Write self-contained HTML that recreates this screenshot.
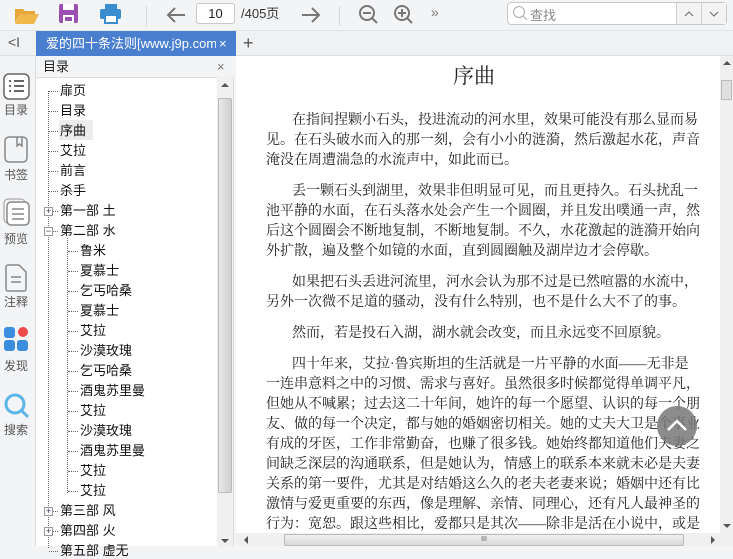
<!DOCTYPE html>
<html><head><meta charset="utf-8">
<style>
*{margin:0;padding:0;box-sizing:border-box}
body{width:733px;height:546px;overflow:hidden;background:#f3f4f6;font-family:"Liberation Sans","Noto Sans CJK SC",sans-serif;position:relative;color:#222}
.abs{position:absolute}
.tb{left:0;top:0;width:733px;height:31px;background:#f3f4f6;border-bottom:1px solid #e2e3e5}
.tabbar{left:0;top:31px;width:733px;height:25px;background:#f0f1f3;border-bottom:1px solid #dcdcdc}
.tab{left:36px;top:31px;width:200px;height:25px;background:#4a7fd0;color:#fff;font-size:13px;line-height:25px;padding-left:10px;white-space:nowrap;overflow:hidden}
.side{left:0;top:56px;width:36px;height:490px;background:#f3f4f6;border-right:1px solid #dcdcdc}
.side .l{position:absolute;left:0;width:32px;text-align:center;font-size:12px;color:#555}
.toc{left:36px;top:56px;width:198px;height:490px;background:#fff;border-right:1px solid #ddd}
.toch{left:36px;top:56px;width:198px;height:22px;background:#f3f4f6;border-bottom:1px solid #ddd;font-size:13px;line-height:22px;padding-left:7px}
.it{position:absolute;font-size:13px;line-height:16px;white-space:nowrap;color:#111}
.doc{left:236px;top:56px;width:484px;height:477px;background:#fff}
.ln{position:absolute;left:266px;width:414px;font-family:"Liberation Serif","Noto Serif CJK SC",serif;font-size:14px;line-height:20px;text-align:justify;text-align-last:justify;white-space:nowrap;color:#222}
.ln.i{left:292px;width:388px}
.ln.e{text-align-last:left}
</style></head><body>
<div class="abs tb"></div>
<svg class="abs" style="left:14px;top:5px" width="26" height="20"><path d="M1 4h8l2 2h10v3H6L1 18z" fill="#e8a63a"/><path d="M6 9h19l-5 10H1z" fill="#f0b84a"/></svg>
<svg class="abs" style="left:59px;top:4px" width="20" height="20"><rect x="0" y="0" width="19" height="19" rx="2" fill="#9b4fb0"/><rect x="4" y="0" width="11" height="6" fill="#fff"/><rect x="4" y="11" width="11" height="8" fill="#fff"/><rect x="6" y="13" width="7" height="4" fill="#9b4fb0"/></svg>
<svg class="abs" style="left:100px;top:4px" width="22" height="20"><rect x="5" y="0" width="12" height="5" fill="#3a8ed0"/><rect x="0" y="5" width="21" height="10" rx="2" fill="#3a8ed0"/><rect x="5" y="11" width="12" height="8" fill="#fff" stroke="#3a8ed0" stroke-width="2"/></svg>
<div class="abs" style="left:146px;top:6px;width:1px;height:20px;background:#d8d8d8"></div>
<svg class="abs" style="left:165px;top:5px" width="22" height="20"><path d="M20 10H3M10 3L3 10l7 7" stroke="#777" stroke-width="2" fill="none"/></svg>
<div class="abs" style="left:196px;top:3px;width:39px;height:21px;border:1px solid #c8c8c8;border-radius:3px;background:#fff;font-size:13px;line-height:19px;text-align:center">10</div>
<div class="abs" style="left:241px;top:5px;font-size:13px;line-height:18px;color:#333">/405页</div>
<svg class="abs" style="left:300px;top:5px" width="22" height="20"><path d="M2 10h17M12 3l7 7-7 7" stroke="#777" stroke-width="2" fill="none"/></svg>
<div class="abs" style="left:339px;top:6px;width:1px;height:20px;background:#d8d8d8"></div>
<svg class="abs" style="left:358px;top:4px" width="22" height="22"><circle cx="9" cy="9" r="7" stroke="#777" stroke-width="2" fill="none"/><path d="M5 9h8M14 14l5 5" stroke="#777" stroke-width="2"/></svg>
<svg class="abs" style="left:393px;top:4px" width="22" height="22"><circle cx="9" cy="9" r="7" stroke="#777" stroke-width="2" fill="none"/><path d="M5 9h8M9 5v8M14 14l5 5" stroke="#777" stroke-width="2"/></svg>
<div class="abs" style="left:431px;top:4px;font-size:14px;color:#777">»</div>
<div class="abs" style="left:507px;top:2px;width:220px;height:23px;border:1px solid #c8c8c8;border-radius:4px;background:#fff"></div>
<div class="abs" style="left:676px;top:3px;width:1px;height:21px;background:#d0d0d0"></div>
<div class="abs" style="left:701px;top:3px;width:1px;height:21px;background:#d0d0d0"></div>
<div class="abs" style="left:677px;top:3px;width:24px;height:21px;background:#f3f3f3"></div>
<div class="abs" style="left:702px;top:3px;width:24px;height:21px;background:#f3f3f3"></div>
<svg class="abs" style="left:512px;top:5px" width="16" height="16"><circle cx="7" cy="7" r="5.5" stroke="#aaa" fill="none"/><path d="M11 11l4 4" stroke="#aaa"/></svg>
<div class="abs" style="left:530px;top:5px;font-size:13px;color:#888">查找</div>
<svg class="abs" style="left:682px;top:9px" width="14" height="10"><path d="M3 7l4-4 4 4" stroke="#666" fill="none"/></svg>
<svg class="abs" style="left:707px;top:9px" width="14" height="10"><path d="M3 3l4 4 4-4" stroke="#666" fill="none"/></svg>

<div class="abs tabbar"></div>
<div class="abs" style="left:8px;top:34px;font-size:14px;color:#555">&lt;I</div>
<div class="abs tab">爱的四十条法则[www.j9p.com].<span style="position:absolute;left:180px;top:0;background:#4a7fd0;padding:0 3px">×</span></div>
<div class="abs" style="left:243px;top:31px;font-size:18px;line-height:24px;color:#555">+</div>

<div class="abs side">
<svg class="abs" style="left:3px;top:17px" width="27" height="27"><rect x="1" y="1" width="25" height="25" rx="5" fill="#fff" stroke="#666" stroke-width="1.5"/><path d="M6 8h2M11 8h10M6 13h2M11 13h10M6 18h2M11 18h10" stroke="#666" stroke-width="2"/></svg>
<div class="l" style="top:45px">目录</div>
<svg class="abs" style="left:4px;top:80px" width="25" height="27"><rect x="1" y="1" width="22" height="25" rx="4" fill="none" stroke="#888" stroke-width="1.5"/><path d="M13 1v9l2.5-2 2.5 2V1" fill="none" stroke="#888" stroke-width="1.5"/></svg>
<div class="l" style="top:110px">书签</div>
<svg class="abs" style="left:3px;top:142px" width="27" height="28"><rect x="1" y="1" width="21" height="24" rx="4" fill="none" stroke="#999"/><rect x="4" y="4" width="22" height="23" rx="4" fill="#fff" stroke="#888" stroke-width="1.5"/><path d="M9 11h12M9 16h12M9 21h12" stroke="#888" stroke-width="1.5"/></svg>
<div class="l" style="top:174px">预览</div>
<svg class="abs" style="left:5px;top:208px" width="22" height="28"><path d="M1 3a2 2 0 0 1 2-2h11l7 7v17a2 2 0 0 1-2 2H3a2 2 0 0 1-2-2z" fill="none" stroke="#888" stroke-width="1.5"/><path d="M6 13h10M6 18h10" stroke="#888" stroke-width="1.5"/></svg>
<div class="l" style="top:237px">注释</div>
<svg class="abs" style="left:3px;top:270px" width="26" height="26"><rect x="1" y="1" width="11" height="11" rx="3" fill="#3b8de0"/><circle cx="20" cy="6" r="5" fill="#f04a4a"/><rect x="1" y="14" width="11" height="11" rx="3" fill="#3b8de0"/><rect x="14" y="14" width="11" height="11" rx="3" fill="#3b8de0"/></svg>
<div class="l" style="top:301px">发现</div>
<svg class="abs" style="left:3px;top:336px" width="28" height="28"><circle cx="12" cy="12" r="9" fill="none" stroke="#5bb5e8" stroke-width="3"/><path d="M18 18l7 7" stroke="#5bb5e8" stroke-width="3"/></svg>
<div class="l" style="top:365px">搜索</div>
</div>

<div class="abs toc"></div>
<div class="abs toch">目录<span style="position:absolute;left:181px;color:#777">×</span></div>
<div class="abs" style="left:48px;top:91px;height:457px;border-left:1px dotted #666"></div>
<div class="abs" style="left:67px;top:238px;height:255px;border-left:1px dotted #666"></div>
<div class="abs" style="left:59px;top:120px;width:34px;height:20px;background:#ececec"></div>
<div id="toc"></div>
<div class="abs" style="left:217px;top:77px;width:16px;height:469px;background:#f0f0f0"></div>
<div class="abs" style="left:218px;top:98px;width:14px;height:395px;background:linear-gradient(90deg,#e8e8e8,#d0d0d0);border:1px solid #bbb;border-radius:2px"></div>
<svg class="abs" style="left:221px;top:82px" width="8" height="6"><path d="M0 5l4-4 4 4z" fill="#555"/></svg>
<svg class="abs" style="left:221px;top:538px" width="8" height="6"><path d="M0 1l4 4 4-4z" fill="#555"/></svg>

<div class="abs doc"></div>
<div class="abs" style="left:236px;top:62px;width:476px;text-align:center;font-family:'Liberation Serif','Noto Serif CJK SC',serif;font-size:21px;line-height:28px;color:#222">序曲</div>
<div id="txt"></div>
<div class="abs" style="left:720px;top:56px;width:13px;height:477px;background:#f0f0f0"></div>
<div class="abs" style="left:721px;top:80px;width:11px;height:20px;background:#e0e0e0;border:1px solid #bbb"></div>
<svg class="abs" style="left:723px;top:60px" width="8" height="6"><path d="M0 5l4-4 4 4z" fill="#555"/></svg>
<svg class="abs" style="left:723px;top:523px" width="8" height="6"><path d="M0 1l4 4 4-4z" fill="#555"/></svg>
<div class="abs" style="left:236px;top:533px;width:497px;height:13px;background:#f0f0f0"></div>
<div class="abs" style="left:284px;top:534px;width:400px;height:12px;background:linear-gradient(#f0f0f0,#d8d8d8);border:1px solid #bbb;border-radius:2px;font-size:7px;text-align:center;color:#555;line-height:10px">III</div>
<svg class="abs" style="left:243px;top:536px" width="6" height="8"><path d="M5 0L1 4l4 4z" fill="#555"/></svg>
<svg class="abs" style="left:710px;top:536px" width="6" height="8"><path d="M1 0l4 4-4 4z" fill="#555"/></svg>
<div class="abs" style="left:657px;top:406px;width:40px;height:40px;border-radius:50%;background:rgba(120,120,120,.85)"></div>
<svg class="abs" style="left:666px;top:417px" width="22" height="16"><path d="M2 13l9-9 9 9" stroke="#fff" stroke-width="2.5" fill="none"/></svg>

<script>
var t=[["扉页",0],["目录",0],["序曲",0],["艾拉",0],["前言",0],["杀手",0],["第一部 土",0,"+"],["第二部 水",0,"-"],["鲁米",1],["夏慕士",1],["乞丐哈桑",1],["夏慕士",1],["艾拉",1],["沙漠玫瑰",1],["乞丐哈桑",1],["酒鬼苏里曼",1],["艾拉",1],["沙漠玫瑰",1],["酒鬼苏里曼",1],["艾拉",1],["艾拉",1],["第三部 风",0,"+"],["第四部 火",0,"+"],["第五部 虚无",0]];
var h="";t.forEach(function(e,i){var y=83+i*20,x=e[1]?80:60;
h+='<div class="abs" style="left:'+(e[1]?68:49)+'px;top:'+(y+8)+'px;width:'+(e[1]?10:9)+'px;border-top:1px dotted #666"></div>';
if(e[2])h+='<div class="abs" style="left:44px;top:'+(y+4)+'px;width:9px;height:9px;border:1px solid #999;background:#fff;font-size:9px;line-height:7px;text-align:center;color:#335">'+e[2].replace("-","−")+'</div>';
h+='<div class="it" style="left:'+x+'px;top:'+y+'px">'+e[0]+'</div>';});
document.getElementById("toc").innerHTML=h;
var P=[[111,["在指间捏颗小石头，投进流动的河水里，效果可能没有那么显而易","见。在石头破水而入的那一刻，会有小小的涟漪，然后激起水花，声音","淹没在周遭湍急的水流声中，如此而已。"]],
[182,["丢一颗石头到湖里，效果非但明显可见，而且更持久。石头扰乱一","池平静的水面，在石头落水处会产生一个圆圈，并且发出噗通一声，然","后这个圆圈会不断地复制，不断地复制。不久，水花激起的涟漪开始向","外扩散，遍及整个如镜的水面，直到圆圈触及湖岸边才会停歇。"]],
[273,["如果把石头丢进河流里，河水会认为那不过是已然喧嚣的水流中，","另外一次微不足道的骚动，没有什么特别，也不是什么大不了的事。"]],
[324,["然而，若是投石入湖，湖水就会改变，而且永远变不回原貌。"]],
[355,["四十年来，艾拉·鲁宾斯坦的生活就是一片平静的水面——无非是","一连串意料之中的习惯、需求与喜好。虽然很多时候都觉得单调平凡，","但她从不喊累；过去这二十年间，她许的每一个愿望、认识的每一个朋","友、做的每一个决定，都与她的婚姻密切相关。她的丈夫大卫是个事业","有成的牙医，工作非常勤奋，也赚了很多钱。她始终都知道他们夫妻之","间缺乏深层的沟通联系，但是她认为，情感上的联系本来就未必是夫妻","关系的第一要件，尤其是对结婚这么久的老夫老妻来说；婚姻中还有比","激情与爱更重要的东西，像是理解、亲情、同理心，还有凡人最神圣的","行为：宽恕。跟这些相比，爱都只是其次——除非是活在小说中，或是"]]];
var s="";P.forEach(function(p,pi){p[1].forEach(function(l,i){var c="ln"+(i==0?" i":"")+((i==p[1].length-1&&pi<4)?" e":"");s+='<div class="'+c+'" style="top:'+(p[0]+i*20)+'px">'+l+'</div>';});});
document.getElementById("txt").innerHTML=s;
</script>
</body></html>
